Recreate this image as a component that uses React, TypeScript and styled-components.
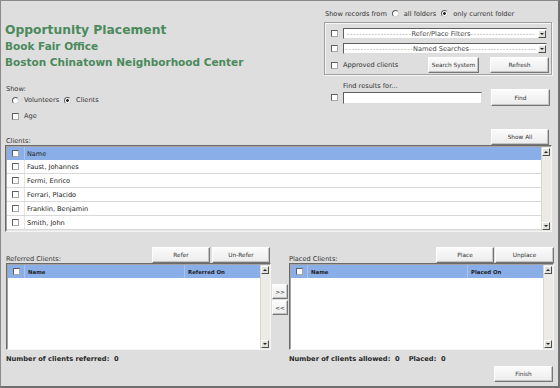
import styled, { createGlobalStyle } from "styled-components";

const GlobalStyle = createGlobalStyle`
  html, body { margin: 0; padding: 0; background: #dedede; }
  body { font-family: "DejaVu Sans", Verdana, sans-serif; }
`;

const clients = [
  "Faust, Johannes",
  "Fermi, Enrico",
  "Ferrari, Placido",
  "Franklin, Benjamin",
  "Smith, John",
];

const Frame = styled.div`
  width: 560px;
  height: 388px;
  box-sizing: border-box;
  background: #dedede;
  border: 1px solid #8a8a8a;
  border-right: 2px solid #707070;
  border-bottom: 2px solid #707070;
  display: flex;
  flex-direction: column;
  color: #333;
  overflow: hidden;
`;

const Top = styled.div`
  display: flex;
  height: 127px;
  flex: none;
`;

const LeftCol = styled.div`
  width: 319px;
  padding: 21px 0 0 4px;
`;

const Title = styled.div<{ $size: number }>`
  font-size: ${(p) => p.$size}px;
  line-height: 16px;
  font-weight: bold;
  color: #4a8a5c;
  white-space: nowrap;
`;

const Label = styled.div<{ $top?: number; $left?: number }>`
  font-size: 6.6px;
  line-height: 8px;
  margin-top: ${(p) => p.$top ?? 0}px;
  padding-left: ${(p) => p.$left ?? 0}px;
  white-space: nowrap;
`;

const OptionRow = styled.div<{ $top?: number }>`
  display: flex;
  align-items: center;
  height: 10px;
  padding-left: 7px;
  margin-top: ${(p) => p.$top ?? 0}px;
  gap: 5px;
  font-size: 6.6px;
  white-space: nowrap;
`;

const Radio = styled.span<{ $on?: boolean }>`
  width: 7px;
  height: 7px;
  flex: none;
  box-sizing: border-box;
  border-radius: 50%;
  border: 1px solid;
  border-color: #5e5e5e #d4d4d4 #d4d4d4 #5e5e5e;
  background: ${(p) =>
    p.$on ? "radial-gradient(circle, #222 0 1.1px, #fff 1.6px)" : "#fff"};
`;

const Check = styled.span`
  width: 7px;
  height: 7px;
  flex: none;
  box-sizing: border-box;
  background: #fff;
  border: 1px solid;
  border-color: #5e5e5e #a8a8a8 #a8a8a8 #5e5e5e;
`;

const RightCol = styled.div`
  flex: 1;
  padding-top: 7px;
`;

const RecordsRow = styled.div`
  display: flex;
  align-items: center;
  height: 11px;
  gap: 5px;
  padding-left: 1px;
  font-size: 6.6px;
  white-space: nowrap;
`;

const FilterBox = styled.div`
  margin-top: 3px;
  width: 228px;
  height: 53px;
  box-sizing: border-box;
  border: 1px solid #a0a0a0;
  box-shadow: inset 1px 1px 0 #f6f6f6, 1px 1px 0 #f6f6f6;
  padding: 5px 4px 0 6px;
  display: flex;
  flex-direction: column;
  gap: 4px;
`;

const FilterRow = styled.div<{ $h: number; $top?: number }>`
  display: flex;
  align-items: center;
  height: ${(p) => p.$h}px;
  margin-top: ${(p) => p.$top ?? 0}px;
  gap: 5px;
  font-size: 6.6px;
  white-space: nowrap;
`;

const Select = styled.div`
  flex: 1;
  height: 11px;
  box-sizing: border-box;
  background: #fff;
  border: 1px solid;
  border-color: #5e5e5e #dcdcdc #dcdcdc #5e5e5e;
  display: flex;
  align-items: center;
  overflow: hidden;
`;

const SelectText = styled.div`
  flex: 1;
  min-width: 0;
  display: flex;
  justify-content: center;
  white-space: nowrap;
  font-size: 6.6px;
  color: #444;
`;

const Dashes = styled.span`
  color: #8a8a8a;
  letter-spacing: 0.7px;
`;

const Arrow = styled.span<{ $down?: boolean }>`
  width: 8px;
  height: 8px;
  flex: none;
  box-sizing: border-box;
  background: #e2e0da;
  border: 1px solid;
  border-color: #fff #4e4e4e #4e4e4e #fff;
  display: flex;
  align-items: center;
  justify-content: center;
  &::before {
    content: "";
    border-left: 2px solid transparent;
    border-right: 2px solid transparent;
    ${(p) =>
      p.$down ? "border-top: 2px solid #222;" : "border-bottom: 2px solid #222;"}
  }
`;

const Btn = styled.div<{ $w: number; $h?: number; $ml?: number; $mr?: number }>`
  width: ${(p) => p.$w}px;
  height: ${(p) => p.$h ?? 16}px;
  margin-left: ${(p) => p.$ml ?? 0}px;
  margin-right: ${(p) => p.$mr ?? 0}px;
  flex: none;
  box-sizing: border-box;
  display: flex;
  align-items: center;
  justify-content: center;
  font-size: 5.8px;
  color: #333;
  background: linear-gradient(#fbfbfb, #ececec);
  border: 1px solid;
  border-color: #fdfdfd #767676 #767676 #fdfdfd;
  box-shadow: inset -1px -1px 0 #c4c4c4;
  white-space: nowrap;
`;

const FinishBtn = styled(Btn)`
  align-self: flex-end;
  margin-top: 2px;
`;

const ButtonGroup = styled.div<{ $gap: number }>`
  display: flex;
  gap: ${(p) => p.$gap}px;
  margin-left: auto;
`;

const FindRow = styled.div`
  display: flex;
  align-items: center;
  height: 17px;
  margin-top: -1px;
  padding-left: 7px;
  gap: 5px;
`;

const TextInput = styled.div`
  width: 139px;
  height: 12px;
  box-sizing: border-box;
  background: #fff;
  border: 1px solid;
  border-color: #5e5e5e #dcdcdc #dcdcdc #5e5e5e;
`;

const SectionHead = styled.div`
  display: flex;
  align-items: flex-end;
  justify-content: space-between;
  height: 17px;
  flex: none;
  padding: 0 9px 0 5px;
`;

const ClientsWrap = styled.div`
  margin: 0 6px 0 4px;
`;

const ListBox = styled.div`
  height: 87px;
  box-sizing: border-box;
  display: flex;
  border: 1px solid;
  border-color: #6a6a6a #f4f4f4 #f4f4f4 #6a6a6a;
  box-shadow: inset 1px 1px 0 #a4a4a4;
  padding: 1px 0 0 1px;
`;

const Table = styled.div<{ $fill: string }>`
  flex: 1;
  min-width: 0;
  display: flex;
  flex-direction: column;
  background: ${(p) => p.$fill};
`;

const HeadRow = styled.div`
  height: 13px;
  flex: none;
  display: flex;
  background: #8aafe8;
`;

const Row = styled.div`
  height: 14px;
  flex: none;
  box-sizing: border-box;
  display: flex;
  background: #fff;
  border-bottom: 1px solid #d8d8d8;
`;

const BoxCell = styled.div<{ $w: number; $line: string }>`
  width: ${(p) => p.$w}px;
  flex: none;
  display: flex;
  align-items: center;
  justify-content: center;
  border-right: 1px solid ${(p) => p.$line};
`;

const TextCell = styled.div<{
  $w?: number;
  $size: number;
  $bold?: boolean;
  $line?: string;
  $pad?: number;
}>`
  ${(p) => (p.$w ? `width: ${p.$w}px; flex: none;` : "flex: 1;")}
  box-sizing: border-box;
  display: flex;
  align-items: center;
  padding-left: ${(p) => p.$pad ?? 2}px;
  font-size: ${(p) => p.$size}px;
  font-weight: ${(p) => (p.$bold ? "bold" : "normal")};
  color: #222;
  white-space: nowrap;
  ${(p) => (p.$line ? `border-right: 1px solid ${p.$line};` : "")}
`;

const Scroll = styled.div`
  width: 10px;
  flex: none;
  box-sizing: border-box;
  display: flex;
  flex-direction: column;
  justify-content: space-between;
  background: #ecebe5;
  border-left: 1px solid #d9d6ce;
  padding: 1px 1px 1px 0;
`;

const Bottom = styled.div`
  display: flex;
  margin-top: 15px;
  padding-left: 5px;
`;

const Panel = styled.div`
  width: 265px;
  display: flex;
  flex-direction: column;
`;

const PanelHead = styled.div<{ $gap: number }>`
  height: 16px;
  display: flex;
  align-items: flex-end;
  gap: ${(p) => p.$gap}px;
`;

const PanelLabel = styled(Label)`
  flex: 1;
`;

const Mover = styled.div`
  width: 16px;
  margin: 37px 1px 0 1px;
  display: flex;
  flex-direction: column;
  gap: 1px;
`;

const Count = styled.div`
  margin-top: 4px;
  font-size: 6.7px;
  line-height: 10px;
  font-weight: bold;
  color: #2a2a2a;
  white-space: nowrap;
`;

const Gap = styled.span`
  margin-left: 9px;
`;

function ScrollBar() {
  return (
    <Scroll>
      <Arrow />
      <Arrow $down />
    </Scroll>
  );
}

function DropDown({ label, dashes }: { label: string; dashes: number }) {
  const dash = "-".repeat(dashes);
  return (
    <Select>
      <SelectText>
        <Dashes>{dash}</Dashes>
        {label}
        <Dashes>{dash}</Dashes>
      </SelectText>
      <Arrow $down />
    </Select>
  );
}

function SubList({ dateLabel }: { dateLabel: string }) {
  return (
    <ListBox>
      <Table $fill="#fff">
        <HeadRow>
          <BoxCell $w={16} $line="#a8c2ee">
            <Check />
          </BoxCell>
          <TextCell $w={160} $size={5.4} $bold $pad={3} $line="#a8c2ee">
            Name
          </TextCell>
          <TextCell $size={5.4} $bold $pad={3}>
            {dateLabel}
          </TextCell>
        </HeadRow>
      </Table>
      <ScrollBar />
    </ListBox>
  );
}

export default function App() {
  return (
    <>
      <GlobalStyle />
      <Frame>
        <Top>
          <LeftCol>
            <Title $size={12.3}>Opportunity Placement</Title>
            <Title $size={10.5}>Book Fair Office</Title>
            <Title $size={10.5}>Boston Chinatown Neighborhood Center</Title>
            <Label $top={15} $left={1}>
              Show:
            </Label>
            <OptionRow $top={2}>
              <Radio />
              Volunteers
              <Radio $on />
              Clients
            </OptionRow>
            <OptionRow $top={6}>
              <Check />
              Age
            </OptionRow>
          </LeftCol>
          <RightCol>
            <RecordsRow>
              Show records from
              <Radio />
              all folders
              <Radio $on />
              only current folder
            </RecordsRow>
            <FilterBox>
              <FilterRow $h={11}>
                <Check />
                <DropDown label="Refer/Place Filters" dashes={21} />
              </FilterRow>
              <FilterRow $h={11}>
                <Check />
                <DropDown label="Named Searches" dashes={22} />
              </FilterRow>
              <FilterRow $h={16} $top={-1}>
                <Check />
                Approved clients
                <ButtonGroup $gap={11}>
                  <Btn $w={51}>Search System</Btn>
                  <Btn $w={59} $mr={-2}>
                    Refresh
                  </Btn>
                </ButtonGroup>
              </FilterRow>
            </FilterBox>
            <Label $top={7} $left={19}>
              Find results for...
            </Label>
            <FindRow>
              <Check />
              <TextInput />
              <Btn $w={59} $h={17} $ml={4}>
                Find
              </Btn>
            </FindRow>
          </RightCol>
        </Top>

        <SectionHead>
          <Label>Clients:</Label>
          <Btn $w={58}>Show All</Btn>
        </SectionHead>
        <ClientsWrap>
          <ListBox>
            <Table $fill="#e8e8e8">
              <HeadRow>
                <BoxCell $w={17} $line="#a8c2ee">
                  <Check />
                </BoxCell>
                <TextCell $size={6.5} $pad={2}>
                  Name
                </TextCell>
              </HeadRow>
              {clients.map((c) => (
                <Row key={c}>
                  <BoxCell $w={17} $line="#e4e4e4">
                    <Check />
                  </BoxCell>
                  <TextCell $size={6.6} $pad={2}>
                    {c}
                  </TextCell>
                </Row>
              ))}
            </Table>
            <ScrollBar />
          </ListBox>
        </ClientsWrap>

        <Bottom>
          <Panel>
            <PanelHead $gap={2}>
              <PanelLabel>Referred Clients:</PanelLabel>
              <Btn $w={58}>Refer</Btn>
              <Btn $w={58} $mr={1}>
                Un-Refer
              </Btn>
            </PanelHead>
            <SubList dateLabel="Referred On" />
            <Count>Number of clients referred:&nbsp;&nbsp;0</Count>
          </Panel>
          <Mover>
            <Btn $w={16} $h={15}>
              &gt;&gt;
            </Btn>
            <Btn $w={16} $h={15}>
              &lt;&lt;
            </Btn>
          </Mover>
          <Panel>
            <PanelHead $gap={1}>
              <PanelLabel>Placed Clients:</PanelLabel>
              <Btn $w={58}>Place</Btn>
              <Btn $w={59}>Unplace</Btn>
            </PanelHead>
            <SubList dateLabel="Placed On" />
            <Count>
              Number of clients allowed:&nbsp;&nbsp;0<Gap>Placed:&nbsp;&nbsp;0</Gap>
            </Count>
            <FinishBtn $w={59} $h={16} $mr={1}>
              Finish
            </FinishBtn>
          </Panel>
        </Bottom>
      </Frame>
    </>
  );
}
